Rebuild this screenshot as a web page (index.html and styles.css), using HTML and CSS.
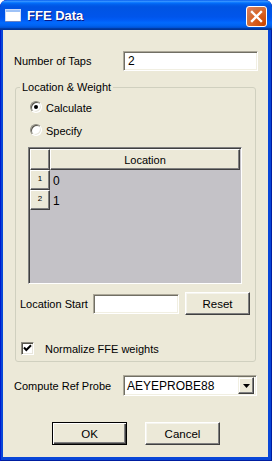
FILE: index.html
```html
<!DOCTYPE html>
<html>
<head>
<meta charset="utf-8">
<link rel="stylesheet" href="styles.css">
</head>
<body>
<div class="window">
  <div class="titlebar">
    <svg class="appicon" width="16" height="13" viewBox="0 0 16 13">
      <rect x="0.5" y="0.5" width="15" height="12" fill="#ffffff" stroke="#c8d8f8"/>
      <rect x="1" y="1" width="14" height="2" fill="#9ec2f7"/>
      <rect x="0" y="12" width="16" height="1" fill="#0a2a8a" opacity="0.5"/>
    </svg>
    <span class="title">FFE Data</span>
    <div class="close">
      <svg width="21" height="21" viewBox="0 0 21 21">
        <path d="M6 6 L15 15 M15 6 L6 15" stroke="#ffffff" stroke-width="2.4" stroke-linecap="square"/>
      </svg>
    </div>
  </div>
  <div class="client">
    <div class="row taps">
      <span class="lbl w-taps">Number of Taps</span>
      <div class="field w-taps-field">2</div>
    </div>
    <fieldset class="group">
      <legend>Location &amp; Weight</legend>
      <div class="radio-row">
        <span class="radio checked"></span><span>Calculate</span>
      </div>
      <div class="radio-row">
        <span class="radio"></span><span>Specify</span>
      </div>
      <div class="grid">
        <div class="grid-head">
          <div class="hcell corner"></div>
          <div class="hcell col">Location</div>
        </div>
        <div class="grid-row">
          <div class="hcell rowhead">1</div>
          <div class="val">0</div>
        </div>
        <div class="grid-row">
          <div class="hcell rowhead">2</div>
          <div class="val">1</div>
        </div>
      </div>
      <div class="row start">
        <span class="lbl w-start">Location Start</span>
        <div class="field w-start-field"></div>
        <div class="btn reset">Reset</div>
      </div>
      <div class="row check-row">
        <span class="checkbox">
          <svg width="11" height="11" viewBox="0 0 11 11">
            <path d="M2 4.5 L4.3 7 L9 2.2" fill="none" stroke="#000" stroke-width="2"/>
          </svg>
        </span>
        <span>Normalize FFE weights</span>
      </div>
    </fieldset>
    <div class="row probe">
      <span class="lbl w-taps">Compute Ref Probe</span>
      <div class="field combo">
        <span class="combo-text">AEYEPROBE88</span>
        <span class="combo-btn">
          <svg width="7" height="4" viewBox="0 0 7 4"><path d="M0 0 H7 L3.5 4 Z" fill="#000"/></svg>
        </span>
      </div>
    </div>
    <div class="buttons">
      <div class="btn default">OK</div>
      <div class="btn">Cancel</div>
    </div>
  </div>
</div>
</body>
</html>
```

FILE: styles.css
```css
html, body {
  margin: 0;
  padding: 0;
  background: #ffffff;
}
body {
  font-family: "Liberation Sans", Arial, sans-serif;
  font-size: 11px;
  color: #000;
}
.window {
  width: 272px;
  height: 461px;
  box-sizing: border-box;
  background: #0846d8;
  border-radius: 7px 7px 0 0;
  display: flex;
  flex-direction: column;
  overflow: hidden;
  padding: 0 4px 4px 3px;
  box-shadow: inset 1px 0 0 #0019cf, inset -1px 0 0 #001ea0, inset 0 -1px 0 #001ea0;
}
.titlebar {
  height: 30px;
  margin: 0 -4px 0 -3px;
  background: linear-gradient(to bottom, #0058ee 0%, #3a93ff 4%, #288eff 6%, #127dff 8%, #036ffc 10%, #0262ee 14%, #0057e5 20%, #0054e3 24%, #0055eb 56%, #005bf5 66%, #026afe 76%, #0062ef 86%, #0052d6 92%, #0040ab 94%, #003092 100%);
  display: flex;
  align-items: center;
  padding: 0 5px 0 5px;
  border-radius: 7px 7px 0 0;
}
.appicon {
  flex: none;
  margin-top: 1px;
}
.title {
  margin-left: 6px;
  color: #fff;
  font-weight: bold;
  font-size: 13px;
  text-shadow: 1px 1px 0 #0a1883;
  flex: 1;
  margin-top: 1px;
}
.close {
  width: 21px;
  height: 21px;
  box-sizing: border-box;
  border: 1px solid #fff;
  border-radius: 3px;
  background: radial-gradient(circle at 90% 90%, #cc4600 0%, #dc6527 55%, #cd7546 70%, #e37754 90%, #f2a58a 100%);
  background-color: #e0532f;
  display: flex;
  align-items: center;
  justify-content: center;
  margin-top: 2px;
}
.close svg {
  margin: -1px;
}
.client {
  flex: 1;
  background: #ece9d8;
  display: flex;
  flex-direction: column;
}
.row {
  display: flex;
  align-items: center;
}
.taps {
  margin-top: 21px;
  padding-left: 11px;
  height: 20px;
}
.w-taps {
  width: 109px;
  flex: none;
}
.field {
  box-sizing: border-box;
  background: #fff;
  border-style: solid;
  border-width: 1px;
  border-color: #aca899 #fff #fff #aca899;
  box-shadow: inset 1px 1px 0 #716f64, inset -1px -1px 0 #f1efe2;
  height: 20px;
  display: flex;
  align-items: center;
  padding-left: 4px;
  font-size: 12px;
}
.w-taps-field {
  width: 135px;
}
.group {
  margin: 10px 12px 0 12px;
  padding: 0 0 6px 0;
  border: 1px solid #d0d0bf;
  border-radius: 3px;
  min-width: 0;
}
.group legend {
  margin-left: 4px;
  padding: 0 2px;
  line-height: 13px;
}
.radio-row {
  height: 23px;
  display: flex;
  align-items: center;
  padding-left: 14px;
}
.radio-row:first-of-type {
  margin-top: 2px;
}
.radio {
  width: 12px;
  height: 12px;
  box-sizing: border-box;
  border-radius: 50%;
  border: 1px solid;
  border-color: #8d8b80 #fff #fff #8d8b80;
  background: #fff;
  box-shadow: inset 1px 1px 0 #55534a, inset -1px -1px 0 #e8e6dc;
  margin-right: 4px;
  margin-top: -1px;
  position: relative;
  flex: none;
}
.radio.checked::after {
  content: "";
  position: absolute;
  left: 3px;
  top: 3px;
  width: 4px;
  height: 4px;
  border-radius: 50%;
  background: #000;
}
.grid {
  margin: 5px 0 0 12px;
  width: 214px;
  height: 137px;
  box-sizing: border-box;
  border-style: solid;
  border-width: 1px;
  border-color: #808080 #fff #fff #808080;
  box-shadow: inset 1px 1px 0 #404040;
  background: #c4c2c7;
  padding: 1px 1px 0 1px;
}
.grid-head, .grid-row {
  display: flex;
}
.hcell {
  box-sizing: border-box;
  background: #ece9d8;
  border-style: solid;
  border-width: 1px;
  border-color: #fff #404040 #404040 #fff;
  box-shadow: inset -1px -1px 0 #808080;
  display: flex;
  align-items: center;
  justify-content: center;
}
.corner {
  width: 20px;
  height: 21px;
}
.col {
  flex: 1;
  height: 21px;
  font-size: 11px;
}
.rowhead {
  width: 20px;
  height: 20px;
  font-size: 8px;
  padding-bottom: 4px;
}
.val {
  padding-left: 3px;
  padding-top: 2px;
  font-size: 12px;
  display: flex;
  align-items: center;
}
.start {
  margin-top: 8px;
  height: 23px;
  padding-left: 4px;
}
.w-start {
  width: 73px;
  flex: none;
}
.w-start-field {
  width: 86px;
}
.btn {
  box-sizing: border-box;
  width: 75px;
  height: 23px;
  background: #ece9d8;
  border-style: solid;
  border-width: 1px;
  border-color: #fff #404040 #404040 #fff;
  box-shadow: inset -1px -1px 0 #808080, inset 1px 1px 0 #f5f4ee;
  display: flex;
  align-items: center;
  justify-content: center;
  font-size: 11.5px;
}
.reset {
  width: 65px;
  margin-left: 6px;
}
.check-row {
  margin-top: 27px;
  padding-left: 5px;
  height: 13px;
}
.checkbox {
  width: 13px;
  height: 13px;
  box-sizing: border-box;
  border-style: solid;
  border-width: 1px;
  border-color: #8d8b80 #fff #fff #8d8b80;
  box-shadow: inset 1px 1px 0 #55534a, inset -1px -1px 0 #e8e6dc;
  background: #fff;
  margin-right: 11px;
  display: flex;
  align-items: center;
  justify-content: center;
  flex: none;
}
.probe {
  margin-top: 13px;
  padding-left: 11px;
  height: 21px;
}
.combo {
  width: 134px;
  height: 21px;
  padding-left: 3px;
  padding-right: 2px;
  display: flex;
  align-items: center;
}
.combo-text {
  flex: 1;
}
.combo-btn {
  width: 16px;
  height: 17px;
  box-sizing: border-box;
  background: #ece9d8;
  border-style: solid;
  border-width: 1px;
  border-color: #f1efe2 #404040 #404040 #f1efe2;
  box-shadow: inset -1px -1px 0 #808080, inset 1px 1px 0 #fff;
  display: flex;
  align-items: center;
  justify-content: center;
}
.buttons {
  margin-top: 26px;
  display: flex;
  justify-content: center;
  gap: 18px;
  padding-left: 1px;
}
.btn.default {
  border: 1px solid #000;
  box-shadow: inset 1px 1px 0 #fff, inset -1px -1px 0 #404040, inset -2px -2px 0 #808080;
}
```
